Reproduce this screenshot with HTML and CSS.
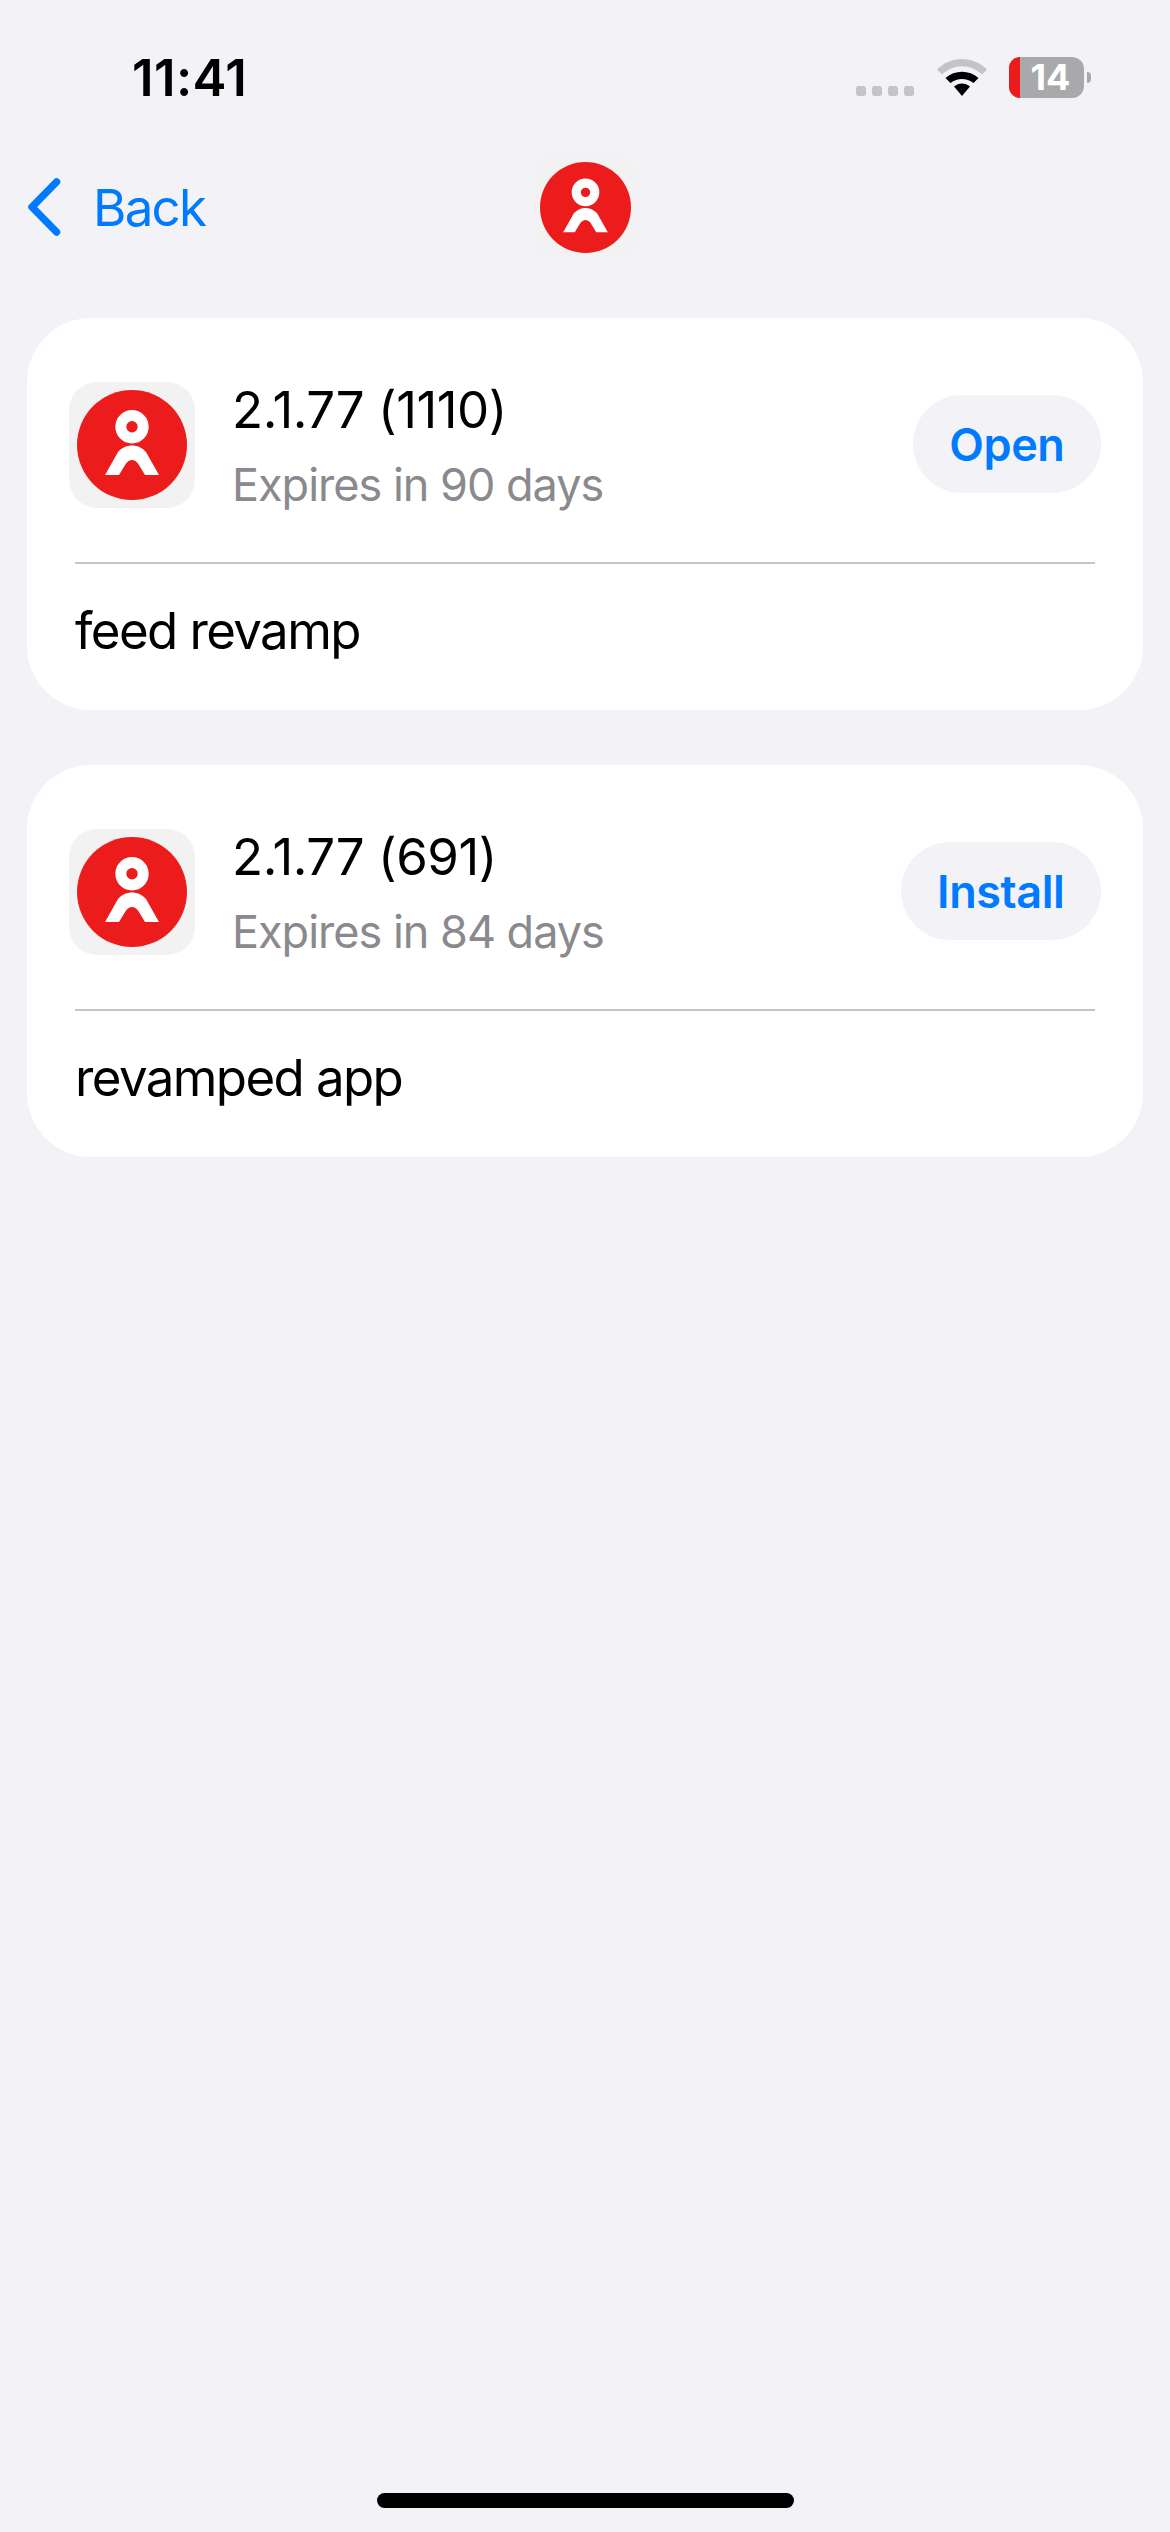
FILE: index.html
```html
<!DOCTYPE html>
<html lang="en">
<head>
    <meta charset="UTF-8">
    <meta name="viewport" content="width=device-width, initial-scale=1">
    <title>Builds</title>
    <link rel="stylesheet" href="styles.css">
</head>
<body>
<svg class="defs" width="0" height="0">
    <symbol id="logo" viewBox="0 0 110 110">
        <circle cx="55" cy="55" r="55" fill="#ec1c1c"/>
        <circle cx="55" cy="36.700" r="11.200" fill="none" stroke="#fff" stroke-width="11"/>
        <path d="M28 85 L41 62 C45 57.500 50 55.500 55 55.500 C60 55.500 65 57.500 69 62 L82 85 L68 85 L61 73.500 C59 71 57 70 55 70 C53 70 51 71 49 73.500 L42 85 Z" fill="#fff"/>
    </symbol>
</svg>

<div class="statusBar">
    <span class="time">11:41</span>
    <div class="statusIcons">
        <div class="signal"><i></i><i></i><i></i><i></i></div>
        <svg class="wifi" width="50" height="37" viewBox="0 0 50 37">
            <path d="M0 10.500 C14 -3.500 36 -3.500 50 10.500 L45 15.500 C33 4.500 17 4.500 5 15.500 Z" fill="#c4c4c6"/>
            <path d="M8.500 19 C18 10.500 32 10.500 41.500 19 L36.500 24 C29.500 18.500 20.500 18.500 13.500 24 Z" fill="#000"/>
            <path d="M17 27.500 C22 23.500 28 23.500 33 27.500 L25 37 Z" fill="#000"/>
        </svg>
        <div class="battery">
            <div class="batteryBody"><span class="batteryLevel"></span><span class="batteryText">14</span></div>
            <span class="batteryNub"></span>
        </div>
    </div>
</div>

<div class="navBar">
    <a class="back">
        <svg width="34" height="58" viewBox="0 0 34 58">
            <path d="M29.500 4 L5 29 L29.500 54" fill="none" stroke="#007aff" stroke-width="7.500" stroke-linecap="round" stroke-linejoin="round"/>
        </svg>
        <span>Back</span>
    </a>
    <div class="navLogo"><svg width="91" height="91"><use href="#logo"/></svg></div>
</div>

<div class="list">
    <div class="card">
        <div class="cardTop">
            <div class="appIcon"><svg width="110" height="110"><use href="#logo"/></svg></div>
            <div class="info">
                <div class="version">2.1.77 (1110)</div>
                <div class="expires">Expires in 90 days</div>
            </div>
            <button class="action">Open</button>
        </div>
        <div class="divider"></div>
        <div class="notes">feed revamp</div>
    </div>
    <div class="card">
        <div class="cardTop">
            <div class="appIcon"><svg width="110" height="110"><use href="#logo"/></svg></div>
            <div class="info">
                <div class="version">2.1.77 (691)</div>
                <div class="expires">Expires in 84 days</div>
            </div>
            <button class="action">Install</button>
        </div>
        <div class="divider"></div>
        <div class="notes">revamped app</div>
    </div>
</div>

<div class="homeIndicator"></div>
</body>
</html>
```

FILE: styles.css
```css
* {
    padding: 0;
    margin: 0;
    box-sizing: border-box;
}
html, body {
    height: 2532px;
    overflow: hidden;
}
body {
    display: flex;
    flex-direction: column;
    background: #f2f2f7;
    font-family: Inter, "Liberation Sans", sans-serif;
    color: #000;
}
.defs {
    position: absolute;
}

/* status bar */
.statusBar {
    display: flex;
    justify-content: space-between;
    height: 140px;
    padding: 50px 79px 0 132px;
}
.time {
    font-size: 51px;
    font-weight: 600;
    line-height: 56px;
    letter-spacing: 0.400px;
}
.statusIcons {
    display: flex;
    align-items: flex-start;
    padding-top: 7px;
}
.signal {
    display: flex;
    gap: 6px;
    margin-top: 29px;
    margin-right: 23px;
}
.signal i {
    display: block;
    width: 10px;
    height: 10px;
    border-radius: 3px;
    background: #c4c4c6;
}
.wifi {
    margin-top: 2px;
    margin-right: 22px;
}
.battery {
    display: flex;
    align-items: center;
}
.batteryBody {
    position: relative;
    display: flex;
    justify-content: center;
    width: 75px;
    height: 41px;
    border-radius: 12px;
    background: #a9a9ab;
}
.batteryLevel {
    position: absolute;
    left: 0;
    top: 0;
    bottom: 0;
    width: 11px;
    border-radius: 12px 0 0 12px;
    background: #ec1c1c;
}
.batteryText {
    position: relative;
    padding-left: 8px;
    color: #fff;
    font-size: 36px;
    font-weight: 700;
    line-height: 41px;
}
.batteryNub {
    width: 4px;
    height: 11px;
    margin-left: 3px;
    border-radius: 0 4px 4px 0;
    background: #a9a9ab;
}

/* nav */
.navBar {
    display: flex;
    align-items: center;
    position: relative;
    height: 130px;
    margin-top: 2px;
    padding-left: 27px;
}
.back {
    display: flex;
    align-items: center;
    gap: 32px;
    color: #007aff;
    font-size: 51px;
    letter-spacing: -1.700px;
}
.navLogo {
    position: absolute;
    left: 533px;
    top: 13px;
    width: 104px;
    height: 104px;
    display: flex;
    align-items: center;
    justify-content: center;
    border-radius: 24px;
    background: #f2f2f2;
}

/* cards */
.list {
    display: flex;
    flex-direction: column;
    gap: 55px;
    padding: 46px 27px 0;
}
.card {
    height: 392px;
    padding: 64px 42px 0;
    border-radius: 64px;
    background: #fff;
}
.cardTop {
    display: flex;
    align-items: flex-start;
    height: 180px;
}
.appIcon {
    display: flex;
    align-items: center;
    justify-content: center;
    width: 126px;
    height: 126px;
    border-radius: 28px;
    background: #f2f2f2;
}
.info {
    flex: 1;
    padding-left: 37px;
}
.version {
    margin-top: -2px;
    font-size: 51px;
    line-height: 60px;
    letter-spacing: -0.450px;
}
.expires {
    margin-top: 18px;
    color: #8a8a8e;
    font-size: 45px;
    line-height: 54px;
    letter-spacing: -1px;
}
.action {
    height: 98px;
    margin-top: 13px;
    padding: 0 36.500px;
    border: 0;
    border-radius: 49px;
    background: #f2f2f7;
    color: #007aff;
    font-family: inherit;
    font-size: 45px;
    font-weight: 600;
    letter-spacing: -0.400px;
}
.divider {
    height: 1.500px;
    margin: 0 6px;
    background: #c6c6c8;
}
.notes {
    padding: 36px 6px 0;
    font-size: 51px;
    line-height: 62px;
    letter-spacing: -1.600px;
}

.homeIndicator {
    width: 417px;
    height: 15px;
    margin: auto auto 24px;
    border-radius: 8px;
    background: #000;
}
```
